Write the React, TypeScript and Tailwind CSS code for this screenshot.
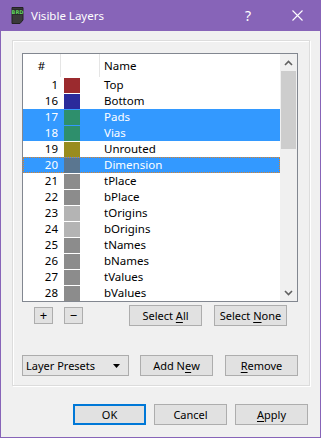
import React from 'react';

type Layer = { n: number; name: string; color: string; sel?: boolean; focus?: boolean };

const LAYERS: Layer[] = [
  { n: 1, name: 'Top', color: '#9b2a2e' },
  { n: 16, name: 'Bottom', color: '#2b2b9b' },
  { n: 17, name: 'Pads', color: '#2e8f6c', sel: true },
  { n: 18, name: 'Vias', color: '#2e8f6c', sel: true },
  { n: 19, name: 'Unrouted', color: '#998c1e' },
  { n: 20, name: 'Dimension', color: '#5a7690', sel: true, focus: true },
  { n: 21, name: 'tPlace', color: '#8c8c8c' },
  { n: 22, name: 'bPlace', color: '#8c8c8c' },
  { n: 23, name: 'tOrigins', color: '#b4b4b4' },
  { n: 24, name: 'bOrigins', color: '#b4b4b4' },
  { n: 25, name: 'tNames', color: '#8c8c8c' },
  { n: 26, name: 'bNames', color: '#8c8c8c' },
  { n: 27, name: 'tValues', color: '#8c8c8c' },
  { n: 28, name: 'bValues', color: '#8c8c8c' },
];

const btn =
  'h-[21px] w-[73px] flex items-center justify-center bg-[#e1e1e1] border border-[#adadad] text-black';

function Chevron({ up }: { up?: boolean }) {
  return (
    <svg width="9" height="6" viewBox="0 0 9 6">
      <polyline
        points={up ? '1,5 4.5,1.5 8,5' : '1,1 4.5,4.5 8,1'}
        fill="none"
        stroke="#606060"
        strokeWidth="1.6"
      />
    </svg>
  );
}

export default function App() {
  return (
    <div className="w-[321px] h-[438px] bg-[#8764b8] flex flex-col font-['Noto_Sans',sans-serif] text-[11px] leading-none">
      {/* Title bar */}
      <div className="h-[31px] flex items-center text-white shrink-0">
        <div className="ml-[11px] w-[13px] h-[17px]">
          <svg width="13" height="17" viewBox="0 0 13 17">
            <path d="M1 0.5 H12 V13 L9 16.5 H1 Z" fill="#3a3a3a" stroke="#222" />
            <rect x="1.5" y="2" width="10" height="6" fill="#2b2b2b" />
            <text x="6.5" y="7" fontSize="5" fontWeight="bold" fill="#5fd35f" textAnchor="middle" fontFamily="DejaVu Sans, sans-serif">
              BRD
            </text>
          </svg>
        </div>
        <span className="ml-[7px] text-[11.5px]">Visible Layers</span>
        <span className="ml-auto mr-[41px] text-[14px]">?</span>
        <svg className="mr-[18px]" width="11" height="11" viewBox="0 0 11 11">
          <path d="M0.5 0.5 L10.5 10.5 M10.5 0.5 L0.5 10.5" stroke="#fff" strokeWidth="1.1" />
        </svg>
      </div>

      {/* Client area */}
      <div className="flex-1 mx-px mb-px bg-[#f0f0f0] flex flex-col">
        {/* Group box */}
        <div className="mt-[9px] ml-[11px] w-[298px] h-[346px] border border-[#dcdcdc] shadow-[inset_1px_1px_0_#ffffff,1px_1px_0_#ffffff] flex flex-col">
          {/* List */}
          <div className="mt-[12px] ml-[9px] w-[276px] h-[249px] border border-[#828790] bg-white flex text-[11.5px]">
            <div className="w-[257px] flex flex-col">
              <div className="h-[23px] flex items-center text-black shrink-0">
                <div className="w-[38px] h-full flex items-center justify-center border-r border-[#e5e5e5]">#</div>
                <div className="w-[39px] h-full border-r border-[#e5e5e5]" />
                <div className="pl-[4px]">Name</div>
              </div>
              {LAYERS.map((l) => (
                <div
                  key={l.n}
                  className={
                    'h-[16px] flex items-center shrink-0 ' +
                    (l.sel ? 'bg-[#3399ff] text-white ' : 'text-black ') +
                    (l.focus ? 'border border-dotted border-[#d9822b]' : '')
                  }
                >
                  <div className={'w-[38px] text-right pr-[3px] ' + (l.focus ? '-ml-px' : '')}>{l.n}</div>
                  <div className="w-[39px] h-full flex items-start">
                    <div
                      className={'ml-[3px] w-[16px] h-[15px] ' + (l.focus ? '' : 'mt-px')}
                      style={{ backgroundColor: l.color }}
                    />
                  </div>
                  <div className="pl-[4px]">{l.name}</div>
                </div>
              ))}
            </div>
            {/* Scrollbar */}
            <div className="w-[17px] bg-[#f0f0f0] flex flex-col">
              <div className="h-[17px] flex items-center justify-center">
                <Chevron up />
              </div>
              <div className="h-[78px] mx-px bg-[#cdcdcd]" />
              <div className="flex-1" />
              <div className="h-[17px] flex items-center justify-center">
                <Chevron />
              </div>
            </div>
          </div>

          {/* +/- and select buttons */}
          <div className="mt-[3px] h-[21px] flex items-center">
            <div className="ml-[21px] w-[19px] h-[17px] flex items-center justify-center bg-[#e1e1e1] border border-[#adadad] text-[13px]">+</div>
            <div className="ml-[11px] w-[19px] h-[17px] flex items-center justify-center bg-[#e1e1e1] border border-[#adadad] text-[13px]">−</div>
            <div className={btn + ' ml-[46px]'}>
              Select&nbsp;<u className="underline-offset-2">A</u>ll
            </div>
            <div className={btn + ' ml-[12px]'}>
              Select&nbsp;<u className="underline-offset-2">N</u>one
            </div>
          </div>

          {/* Presets row */}
          <div className="mt-[29px] h-[21px] flex items-center">
            <div className="ml-[9px] w-[107px] h-[21px] flex items-center bg-[#e5e5e5] border border-[#acacac] text-black">
              <span className="ml-[3px]">Layer Presets</span>
              <svg className="ml-auto mr-[8px]" width="7" height="4" viewBox="0 0 7 4">
                <path d="M0 0 H7 L3.5 4 Z" fill="#000" />
              </svg>
            </div>
            <div className={btn + ' ml-[11px]'}>
              Add N<u className="underline-offset-2">e</u>w
            </div>
            <div className={btn + ' ml-[12px]'}>
              <u className="underline-offset-2">R</u>emove
            </div>
          </div>
        </div>

        {/* Dialog buttons */}
        <div className="mt-[18px] flex items-center">
          <div className="ml-[72px] h-[21px] w-[73px] flex items-center justify-center bg-[#e1e1e1] border-2 border-[#0078d7] text-black">OK</div>
          <div className={btn + ' ml-[8px]'}>Cancel</div>
          <div className={btn + ' ml-[8px]'}>
            <u className="underline-offset-2">A</u>pply
          </div>
        </div>
      </div>
    </div>
  );
}
